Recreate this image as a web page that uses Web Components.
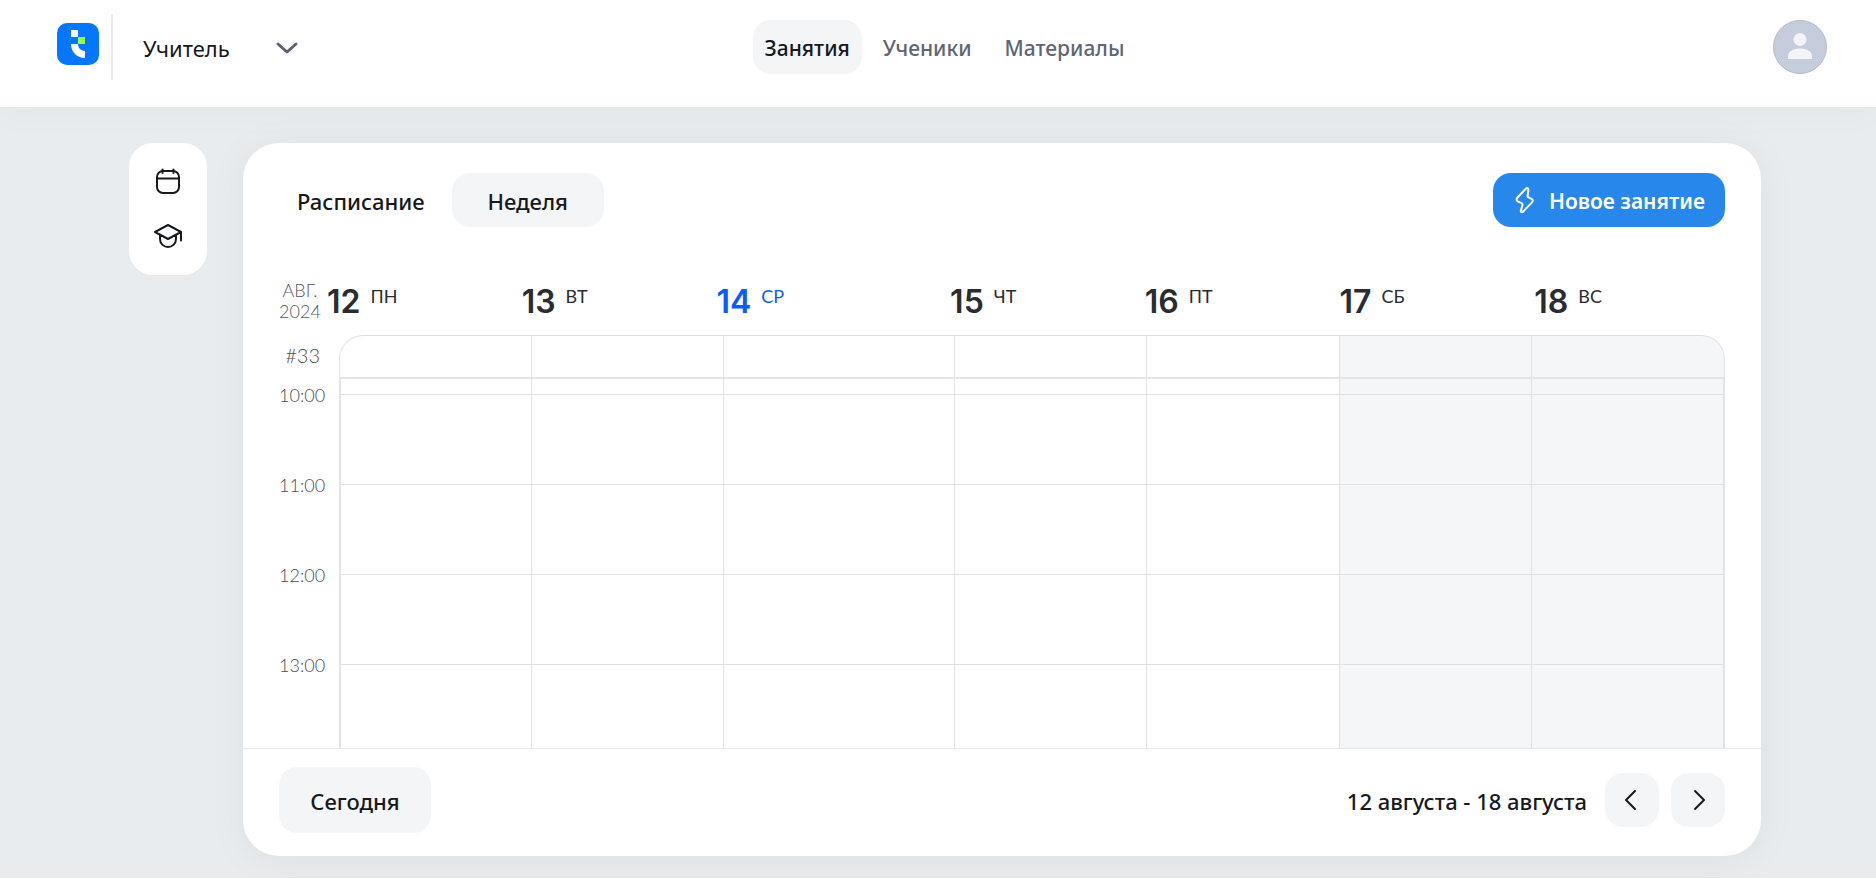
<!DOCTYPE html>
<html lang="ru">
<head>
<meta charset="utf-8">
<meta name="viewport" content="width=device-width, initial-scale=1">
<title>Расписание</title>
<style>
html, body { margin: 0; height: 100%; background: #fff; }
body { font-family: "Noto Sans", "Segoe UI", sans-serif; color: #17191c; }
</style>
</head>
<body>
<teacher-app></teacher-app>
<script>
const define = (name, html, setup) => {
  const template = document.createElement('template');
  template.innerHTML = '<style>*{box-sizing:border-box}button,select{font:inherit;color:inherit;border:0;margin:0;cursor:pointer}a{color:inherit;text-decoration:none}svg{display:block;flex:none}</style>' + html;
  customElements.define(name, class extends HTMLElement {
    constructor() {
      super();
      this.attachShadow({ mode: 'open' }).append(template.content.cloneNode(true));
    }
    connectedCallback() { if (setup) setup(this, this.shadowRoot); }
  });
};

define('app-logo', `
<style>:host{display:block}</style>
<svg width="42" height="42" viewBox="0 0 42 42" role="img" aria-label="Логотип">
  <rect width="42" height="42" rx="10" fill="#0577ff"/>
  <path fill="#fff" d="M14 7h7v7h-7zM14 21h7c0 4 3 7 7 7v7c-8 0-14-6-14-14z"/>
  <path fill="#97ff4d" d="M21 14h7v7h-7z"/>
</svg>`);

define('role-select', `
<style>
:host{display:grid;align-items:center;width:157px}
select{grid-area:1/1;appearance:none;background:none;padding:2px 32px 0 0;height:54px;width:100%;font-size:22px}
svg{grid-area:1/1;justify-self:end;pointer-events:none}
</style>
<select aria-label="Роль"><option>Учитель</option></select>
<svg width="26" height="16" viewBox="0 0 26 16" fill="none" stroke="#5c6370" stroke-width="3" stroke-linecap="round" stroke-linejoin="round"><path d="M4 5l9 8 9-8"/></svg>`);

define('nav-link', `
<style>
:host{display:block}
a{display:flex;align-items:center;height:54px;padding:2px 12px 0;border-radius:18px;font-size:21px;font-weight:500;color:#5f6672}
:host([active]) a{background:#f3f5f7;color:#17191c}
</style>
<a href="#"><slot></slot></a>`);

define('user-avatar', `
<style>
:host{display:block;justify-self:end}
button{display:block;width:54px;height:54px;padding:0;background:none;border-radius:50%}
</style>
<button aria-label="Профиль"><svg width="54" height="54" viewBox="0 0 54 54"><circle cx="27" cy="27" r="26.500" fill="#c5ccdb" stroke="#b3bac8"/><circle cx="27" cy="19.500" r="6.500" fill="#f2f4f8"/><path fill="#f2f4f8" d="M15 38v-2c0-5 6-7.500 12-7.500s12 2.500 12 7.500v2q0 1-1 1h-22q-1 0-1-1z"/></svg></button>`);

define('app-header', `
<style>
:host{display:grid;grid-template-columns:1fr auto 1fr;align-items:center;padding:14px 49px 27px 57px;background:#fff;box-shadow:0 4px 40px rgba(20,30,40,.03)}
.brand{display:flex;align-items:center;height:66px}
app-logo{padding-bottom:6px;margin-right:12px}
.rule{width:2px;height:66px;background:#e8ebee;margin-right:30px}
nav{display:flex;gap:9px;padding-left:5px}
</style>
<div class="brand"><app-logo></app-logo><div class="rule"></div><role-select></role-select></div>
<nav><nav-link active>Занятия</nav-link><nav-link>Ученики</nav-link><nav-link>Материалы</nav-link></nav>
<user-avatar></user-avatar>`);

define('side-menu', `
<style>
:host{display:block;flex:none;width:78px;padding:10px 0 12px;background:#fff;border-radius:24px}
a{display:flex;height:55px;align-items:center;justify-content:center;color:#17191c}
svg{fill:none;stroke:currentColor;stroke-width:2;stroke-linecap:round;stroke-linejoin:round}
</style>
<nav>
<a href="#" aria-label="Календарь"><svg width="30" height="30" viewBox="0 0 30 30"><rect x="4" y="5" width="22" height="22" rx="6"/><path d="M4 12.500h22M9.500 3.500v3.500M20.500 3.500v3.500"/></svg></a>
<a href="#" aria-label="Обучение"><svg width="30" height="30" viewBox="0 0 30 30"><path d="M15 4l13 7-13 7-13-7zM28 11v8.500M7 14v4c0 5 4 8 8 8s8-3 8-8v-4"/></svg></a>
</nav>`);

define('ui-button', `
<style>
:host{display:block}
button{display:flex;align-items:center;justify-content:center;width:152px;height:54px;padding:2px 0 0;border-radius:18px;background:#f3f5f7;font-size:22px;font-weight:500}
:host([tall]) button{height:66px}
:host([square]) button{width:54px;padding:0}
:host([primary]) button{width:232px;gap:12px;background:#2787eb;color:#fff;font-size:21px;font-weight:600}
</style>
<button><slot name="icon"></slot><slot></slot></button>`, (host, root) => {
  const label = host.getAttribute('label');
  if (label) root.querySelector('button').setAttribute('aria-label', label);
});

define('schedule-toolbar', `
<style>
:host{display:flex;align-items:center;padding:30px 36px 0 54px}
h1{margin:0 27px 0 0;padding-top:2px;font-size:22px;font-weight:500;line-height:30px}
.push{margin-left:auto}
</style>
<h1>Расписание</h1><ui-button>Неделя</ui-button>
<ui-button primary class="push"><svg slot="icon" width="24" height="30" viewBox="0 0 24 30" fill="none" stroke="#fff" stroke-width="2" stroke-linecap="round" stroke-linejoin="round"><path d="M12.800 2.700L4.500 11.500C3.200 13 3.300 14.600 4.800 15.400L8.500 17.200C9.500 17.700 9.800 18.300 9.500 19.300L7.900 24.500C7.400 26.200 9 26.800 10.200 25.500L18.800 16.600C20.200 15.100 20.100 13.500 18.500 12.800L15.500 11.400C14.600 11 14.400 10.300 14.700 9.400L15.400 4C15.500 2.200 14 1.500 12.800 2.700z"/></svg>Новое занятие</ui-button>`);

define('day-label', `
<style>
:host{display:flex;align-items:flex-start;gap:10px;color:#2a2c2f}
:host([today]){color:#0b5cf0}
b{font:600 32px/38px Inter,sans-serif}
span{font:400 18px/27px Lato,sans-serif}
</style>
<b><slot name="date"></slot></b><span><slot></slot></span>`);

define('week-header', `
<style>
:host{display:grid;grid-template-columns:48px 1fr 1fr 1.2fr 1fr 1fr 1fr 1fr;padding:53px 32px 0 36px;height:108px}
.month{width:42px;text-align:center;font:300 18px/21px Lato,sans-serif;color:#55585c}
day-label{margin-top:3px}
</style>
<div class="month">АВГ.<br>2024</div>`, (host, root) => {
  ['ПН', 'ВТ', 'СР', 'ЧТ', 'ПТ', 'СБ', 'ВС'].forEach((name, i) => {
    const day = document.createElement('day-label');
    if (i === 2) day.setAttribute('today', '');
    const date = document.createElement('span');
    date.slot = 'date';
    date.textContent = 12 + i;
    day.append(date, name);
    root.append(day);
  });
});

define('week-grid', `
<style>
:host{display:flex;flex:1;min-height:0;overflow:hidden;padding:0 36px}
.times{flex:none;width:60px;font:300 18px/20px Lato,sans-serif;color:#4a4d50}
.week{height:50px;padding:10px 19px 0 0;text-align:right;font-size:20px}
.hour{height:90px}
table{flex:1;height:max-content;table-layout:fixed;border-collapse:separate;border-spacing:0}
col{width:13.889%}
col.wide{width:16.666%}
td{padding:0;height:90px;border:0 solid #dfe1e5;border-width:0 1px 1px 0}
td:first-child{border-left:2px solid #e3e4e8}
td:last-child{border-right:2px solid #e3e4e8}
td:nth-child(n+6){background:#f5f6f8}
.all td{height:44px;border-top-width:1px;border-bottom:2px solid #e3e4e8}
.all td:first-child{border-left-width:1px;border-top-left-radius:24px}
.all td:last-child{border-right-width:1px;border-top-right-radius:24px}
.part td{height:16px}
</style>
<div class="times"><div class="week">#33</div><div class="hour">10:00</div><div class="hour">11:00</div><div class="hour">12:00</div><div class="hour">13:00</div></div>
<table aria-label="Неделя"><colgroup><col><col><col class="wide"><col><col><col><col></colgroup><tbody></tbody></table>`, (host, root) => {
  const body = root.querySelector('tbody');
  for (const kind of ['all', 'part', '', '', '', '']) {
    const row = body.insertRow();
    row.className = kind;
    for (let i = 0; i < 7; i++) row.insertCell();
  }
});

define('week-footer', `
<style>
:host{display:flex;flex:none;align-items:center;gap:12px;padding:18px 36px 23px;border-top:1px solid #e6e8eb}
.range{margin:0 6px 0 auto;padding-top:2px;font-size:22px;font-weight:500;line-height:30px}
</style>
<ui-button tall>Сегодня</ui-button>
<div class="range">12 августа - 18 августа</div>
<ui-button square label="Предыдущая неделя"><svg slot="icon" width="24" height="24" viewBox="0 0 24 24" fill="none" stroke="#17191c" stroke-width="2" stroke-linecap="round" stroke-linejoin="round"><path d="M15 3l-9 9 9 9"/></svg></ui-button>
<ui-button square label="Следующая неделя"><svg slot="icon" width="24" height="24" viewBox="0 0 24 24" fill="none" stroke="#17191c" stroke-width="2" stroke-linecap="round" stroke-linejoin="round"><path d="M9 3l9 9-9 9"/></svg></ui-button>`);

define('schedule-card', `
<style>
:host{display:flex;flex-direction:column;flex:1;min-width:0;background:#fff;border-radius:36px;box-shadow:0 4px 40px rgba(20,30,40,.05)}
</style>
<schedule-toolbar></schedule-toolbar><week-header></week-header><week-grid></week-grid><week-footer></week-footer>`);

define('teacher-app', `
<style>
:host{display:flex;flex-direction:column;height:100vh;min-height:600px;border-bottom:1px solid #fff;background:#e8ecee;box-sizing:border-box}
main{display:flex;flex:1;min-height:0;align-items:flex-start;gap:36px;padding:36px 115px 22px 129px;overflow:hidden}
schedule-card{align-self:stretch}
app-header{position:relative}
</style>
<app-header></app-header>
<main><side-menu></side-menu><schedule-card></schedule-card></main>`);
</script>
</body>
</html>
